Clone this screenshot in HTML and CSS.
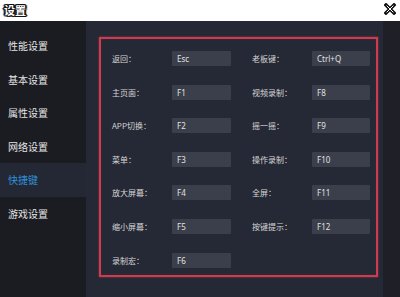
FILE: index.html
```html
<!DOCTYPE html>
<html lang="zh">
<head>
<meta charset="utf-8">
<title>设置</title>
<link rel="stylesheet" href="styles.css">
</head>
<body>
<header class="titlebar">
  <span class="title">设置</span>
  <svg class="close" viewBox="0 0 12 12" width="12" height="12" aria-label="关闭">
    <path d="M2 2 L10 10 M10 2 L2 10" stroke="#111" stroke-width="3.4" stroke-linecap="square"/>
    <path d="M2.6 2.6 L9.4 9.4 M9.4 2.6 L2.6 9.4" stroke="#fff" stroke-width="1" stroke-linecap="butt"/>
  </svg>
</header>
<div class="main">
  <nav class="sidebar">
    <div class="nav-item">性能设置</div>
    <div class="nav-item">基本设置</div>
    <div class="nav-item">属性设置</div>
    <div class="nav-item">网络设置</div>
    <div class="nav-item active">快捷键</div>
    <div class="nav-item">游戏设置</div>
  </nav>
  <section class="panel">
    <div class="shortcuts">
      <div class="pair"><span class="label">返回：</span><span class="key">Esc</span></div>
      <div class="pair"><span class="label">老板键：</span><span class="key">Ctrl+Q</span></div>
      <div class="pair"><span class="label">主页面：</span><span class="key">F1</span></div>
      <div class="pair"><span class="label">视频录制：</span><span class="key">F8</span></div>
      <div class="pair"><span class="label">APP切换：</span><span class="key">F2</span></div>
      <div class="pair"><span class="label">摇一摇：</span><span class="key">F9</span></div>
      <div class="pair"><span class="label">菜单：</span><span class="key">F3</span></div>
      <div class="pair"><span class="label">操作录制：</span><span class="key">F10</span></div>
      <div class="pair"><span class="label">放大屏幕：</span><span class="key">F4</span></div>
      <div class="pair"><span class="label">全屏：</span><span class="key">F11</span></div>
      <div class="pair"><span class="label">缩小屏幕：</span><span class="key">F5</span></div>
      <div class="pair"><span class="label">按键提示：</span><span class="key">F12</span></div>
      <div class="pair"><span class="label">录制宏：</span><span class="key">F6</span></div>
    </div>
  </section>
</div>
</body>
</html>
```
FILE: styles.css
```css
html, body {
  margin: 0;
  padding: 0;
}
body {
  width: 400px;
  height: 297px;
  overflow: hidden;
  background: #1e1f27;
  font-family: "Noto Sans CJK SC", "Noto Sans", sans-serif;
}
.titlebar {
  height: 21px;
  background: #ffffff;
  display: flex;
  align-items: center;
  justify-content: space-between;
  padding: 0 4px 0 4px;
}
.title {
  font-size: 11px;
  font-weight: bold;
  color: #ffffff;
  line-height: 1;
  text-shadow: 1px 0 0 #111, -1px 0 0 #111, 0 1px 0 #111, 0 -1px 0 #111,
    1px 1px 0 #111, -1px -1px 0 #111, 1px -1px 0 #111, -1px 1px 0 #111,
    2px 0 1px #222, -2px 0 1px #222;
  margin-top: -1px;
}
.close {
  display: block;
  margin-top: -4px;
}
.main {
  display: flex;
  height: 276px;
}
.sidebar {
  width: 86px;
  background: #1b1c22;
  padding-top: 8px;
  box-sizing: border-box;
}
.nav-item {
  height: 33.5px;
  display: flex;
  align-items: center;
  padding-left: 8px;
  font-size: 10px;
  color: #e4e4e4;
}
.nav-item.active {
  background: #242734;
  color: #2e90d8;
}
.panel {
  width: 297px;
  background: #252835;
  padding: 16px 0 0 13px;
  box-sizing: border-box;
}
.shortcuts {
  width: 279px;
  height: 240px;
  box-sizing: border-box;
  border: 2px solid #cc3c4f;
  box-shadow: 0 0 2px rgba(220, 70, 90, 0.6), inset 0 0 1px rgba(220, 70, 90, 0.5);
  padding: 12px 0 0 11px;
  display: grid;
  grid-template-columns: 119px 118px;
  column-gap: 21px;
  row-gap: 18.6px;
  align-content: start;
}
.pair {
  display: flex;
  align-items: center;
  height: 15px;
}
.label {
  width: 60px;
  flex: none;
  font-size: 8px;
  color: #d6d6d6;
}
.key {
  flex: 1;
  height: 15px;
  background: #3b3e4b;
  border-radius: 1px;
  box-sizing: border-box;
  padding-left: 5px;
  font-family: "Noto Sans", sans-serif;
  font-size: 8px;
  line-height: 15px;
  color: #e2e2e2;
}
```
